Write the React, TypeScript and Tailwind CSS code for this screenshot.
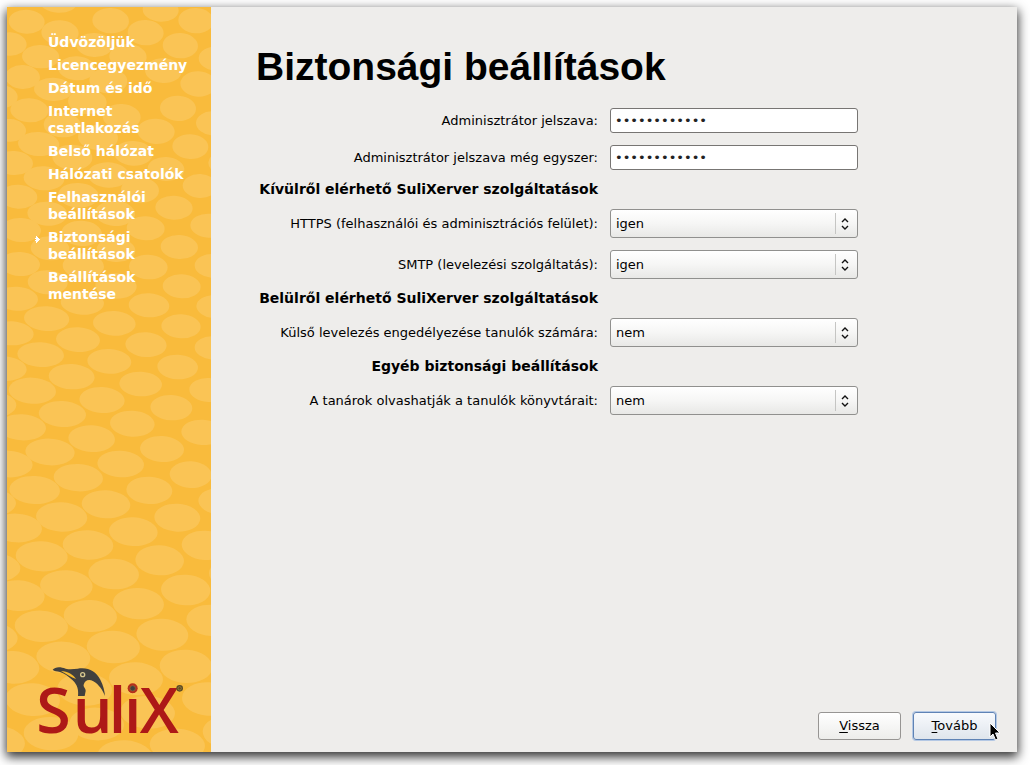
import type { ReactNode } from 'react';
import { useState } from 'react';

const steps = [
  'Üdvözöljük',
  'Licencegyezmény',
  'Dátum és idő',
  'Internet csatlakozás',
  'Belső hálózat',
  'Hálózati csatolók',
  'Felhasználói beállítások',
  'Biztonsági beállítások',
  'Beállítások mentése',
];

// cx, cy, rx, ry
const scales = [
  [80, 65, 54, 36], [175, 5, 57, 33], [332, 62, 55, 38], [482, 30, 54, 35], [588, 62, 53, 38],
  [30, 132, 50, 35], [180, 98, 56, 37], [437, 98, 54, 38], [541, 137, 53, 38], [122, 170, 56, 35],
  [283, 135, 55, 36], [384, 170, 56, 38], [648, 176, 52, 36], [230, 205, 56, 36], [490, 212, 55, 37],
  [68, 231, 52, 36], [160, 268, 58, 35], [325, 242, 57, 38], [595, 252, 54, 38], [5, 290, 48, 34],
  [88, 331, 57, 36], [262, 305, 58, 37], [534, 325, 54, 38], [365, 350, 57, 38],
  [640, 370, 52, 36], [30, 391, 48, 34], [187, 375, 56, 37], [468, 394, 56, 38], [116, 432, 62, 36],
  [294, 412, 60, 38], [571, 440, 54, 37], [400, 460, 58, 37], [42, 489, 57, 36], [217, 472, 60, 38],
  [498, 507, 55, 36], [325, 525, 62, 38], [132, 535, 61, 36], [677, 490, 52, 36], [600, 558, 52, 36],
  [55, 590, 57, 36], [235, 586, 61, 37], [420, 570, 57, 38], [522, 623, 56, 36], [345, 640, 60, 38],
  [142, 641, 60, 36], [627, 677, 56, 36], [63, 690, 60, 36], [245, 700, 61, 38], [437, 685, 57, 36],
  [538, 741, 56, 36], [348, 750, 58, 36], [150, 745, 58, 36], [60, 792, 60, 36], [250, 798, 62, 38],
  [640, 798, 56, 36], [445, 801, 58, 37], [143, 847, 60, 36], [545, 859, 57, 36], [348, 858, 62, 38],
  [50, 896, 64, 36], [247, 908, 65, 36], [447, 916, 61, 36], [647, 920, 58, 35], [140, 956, 68, 37],
  [343, 970, 64, 37], [543, 979, 59, 36], [35, 1000, 66, 36], [234, 1019, 66, 37], [438, 1034, 62, 37],
  [640, 1044, 56, 35], [122, 1064, 70, 37], [328, 1084, 66, 37], [10, 1106, 70, 37], [533, 1101, 61, 37],
  [215, 1130, 69, 38], [422, 1152, 64, 37], [97, 1172, 71, 39], [626, 1170, 58, 36], [306, 1200, 68, 39],
  [-20, 1213, 69, 38], [514, 1223, 63, 38], [187, 1242, 71, 39], [397, 1271, 67, 39], [66, 1282, 72, 39],
  [607, 1297, 63, 38], [275, 1316, 70, 40], [486, 1347, 66, 39], [150, 1356, 74, 40], [25, 1392, 73, 40],
  [362, 1392, 70, 40], [572, 1424, 63, 40], [235, 1433, 74, 41], [448, 1471, 69, 41], [104, 1470, 76, 42],
  [662, 1504, 67, 40], [-25, 1507, 73, 40], [318, 1513, 73, 42], [532, 1553, 69, 42], [185, 1551, 77, 44],
  [50, 1584, 76, 43], [400, 1595, 73, 43], [615, 1636, 70, 44], [264, 1635, 76, 44], [125, 1669, 78, 45],
  [479, 1681, 73, 45], [-17, 1702, 78, 43], [341, 1722, 76, 46], [55, 1787, 79, 46], [199, 1757, 79, 46],
  [557, 1770, 74, 46], [415, 1811, 77, 47], [702, 1722, 75, 45], [271, 1848, 80, 48], [124, 1879, 80, 47],
  [635, 1861, 76, 47], [-27, 1912, 80, 45], [487, 1904, 78, 48], [340, 1941, 80, 49], [190, 1972, 81, 47],
  [38, 2002, 80, 49], [558, 1999, 79, 50], [408, 2036, 81, 49], [254, 2068, 82, 49], [98, 2099, 82, 49],
  [625, 2097, 79, 50], [443, 2137, 82, 49], [290, 2172, 82, 49], [153, 2201, 82, 50], [-7, 2228, 82, 50],
  [688, 2197, 80, 50], [532, 2235, 83, 49], [375, 2270, 83, 49],
];

function ScalePattern() {
  return (
    <svg
      aria-hidden="true"
      className="absolute inset-0 h-full w-full"
      preserveAspectRatio="xMidYMid slice"
      viewBox="21 21 612 2235"
    >
      {scales.map(([cx, cy, rx, ry]) => (
        <ellipse
          cx={cx}
          cy={cy}
          fill="#fac455"
          key={`${cx}-${cy}`}
          rx={rx}
          ry={ry}
          transform={`rotate(3 ${cx} ${cy})`}
        />
      ))}
    </svg>
  );
}

function Logo() {
  return (
    <svg
      aria-label="SuliX"
      className="relative h-[75px] w-[150px] overflow-visible"
      role="img"
      viewBox="50 40 450 225"
    >
      <text
        fill="#ad1917"
        fontFamily="Open Sans, sans-serif"
        fontSize="188"
        fontWeight="600"
        x="48 157 265 311 358"
        y="250"
      >
        SuliX
      </text>
      {/* penguin head */}
      <path
        d="M97 60 C104 51 120 50 136 57 C150 60 160 58 172 57 C204 52 226 64 240 90 C249 107 253 124 254 139 C248 124 236 104 219 95 C205 87 193 93 190 105 C188 111 197 116 196 124 L193 139 L173 139 C175 123 172 106 157 92 C144 80 131 70 119 67 C110 64 102 65 97 60Z"
        fill="#41403e"
      />
      <path d="M122 64 C142 65 160 76 167 88 C152 83 138 73 122 64Z" fill="#f5b82e" />
      <circle cx="187" cy="75" fill="#d8c890" r="8" />
      <circle cx="187" cy="75" fill="#41403e" r="4" />
      {/* dot of the i */}
      <circle cx="337" cy="116" fill="#b5301c" r="15" />
      <circle cx="337" cy="116" fill="#41403e" r="8" stroke="#8d6a3c" strokeWidth="2" />
      <circle cx="478" cy="116" fill="#5b4a26" r="10" />
      <circle cx="478" cy="116" fill="none" r="5" stroke="#a8893a" strokeWidth="2" />
    </svg>
  );
}

function Sidebar({ current }: { current: number }) {
  return (
    <aside className="relative flex w-[204px] shrink-0 flex-col justify-between overflow-hidden bg-[#f9bb3c] pt-[27px] pb-3.5">
      <ScalePattern />
      <ol className="relative flex flex-col gap-1.5 pr-4 pl-[41px] text-sm leading-[17px] font-bold text-white">
        {steps.map((step, index) => (
          <li aria-current={index === current ? 'step' : undefined} className="relative" key={step}>
            {index === current && (
              <svg aria-hidden="true" className="absolute top-[7px] -left-[13px] h-[7px] w-[5px]" viewBox="0 0 5 7">
                <path d="M1 0 H2 V1 H3 V2 H4 V3 H5 V4 H4 V5 H3 V6 H2 V7 H1 V5 H0 V4 H1 V3 H0 V2 H1Z" fill="#fff" />
              </svg>
            )}
            {step}
          </li>
        ))}
      </ol>
      <div className="relative pl-[30px]">
        <Logo />
      </div>
    </aside>
  );
}

function Section({ children }: { children: ReactNode }) {
  return <h2 className="col-start-1 text-right text-sm leading-[15px] font-bold whitespace-nowrap">{children}</h2>;
}

interface FieldProps {
  id: string;
  label: string;
  value: string;
  onChange: (value: string) => void;
}

function PasswordField({ id, label, value, onChange }: FieldProps) {
  return (
    <>
      <label className="col-start-1 text-right whitespace-nowrap" htmlFor={id}>
        {label}
      </label>
      <input
        className="h-[25px] w-full rounded-[3px] border border-[#777573] bg-white px-1 text-[#222] outline-none"
        id={id}
        onChange={(event) => onChange(event.target.value)}
        type="password"
        value={value}
      />
    </>
  );
}

function SelectField({ id, label, value, onChange }: FieldProps) {
  return (
    <>
      <label className="col-start-1 text-right whitespace-nowrap" htmlFor={id}>
        {label}
      </label>
      <div className="relative">
        <select
          className="block h-[29px] w-full appearance-none rounded-[3px] border border-[#90908e] bg-linear-to-b from-white via-[#f6f6f5] to-[#e8e8e6] px-[5px] outline-none"
          id={id}
          onChange={(event) => onChange(event.target.value)}
          value={value}
        >
          <option value="igen">igen</option>
          <option value="nem">nem</option>
        </select>
        <span className="pointer-events-none absolute inset-y-1 right-0 flex w-[23px] items-center justify-center border-l border-[#c5c5c3] pr-1">
          <svg aria-hidden="true" className="h-3 w-2" fill="none" stroke="#111" strokeWidth="1.4" viewBox="0 0 8 12">
            <path d="M1 4 L4 1 L7 4 M1 8 L4 11 L7 8" />
          </svg>
        </span>
      </div>
    </>
  );
}

export default function App() {
  const [password, setPassword] = useState('sulixserver1');
  const [passwordAgain, setPasswordAgain] = useState('sulixserver1');
  const [https, setHttps] = useState('igen');
  const [smtp, setSmtp] = useState('igen');
  const [studentMail, setStudentMail] = useState('nem');
  const [teacherRead, setTeacherRead] = useState('nem');

  return (
    <div className="flex min-h-screen bg-white pt-[7px] pr-[13px] pb-[13px] pl-[7px] font-['DejaVu_Sans',sans-serif] text-[13px] text-black">
      <div className="flex flex-1 bg-[#eeedeb] shadow-[0_4px_10px_1px_rgba(0,0,0,0.8)]">
        <Sidebar current={7} />
        <main className="flex flex-1 flex-col justify-between">
          <form className="pt-[35px] pl-[45px]" id="security">
            <h1 className="mb-4 font-['Liberation_Sans',sans-serif] text-[39px] leading-[50px] font-bold">
              Biztonsági beállítások
            </h1>
            <div className="grid grid-cols-[342px_248px] items-center gap-3">
              <PasswordField id="password" label="Adminisztrátor jelszava:" onChange={setPassword} value={password} />
              <PasswordField
                id="password-again"
                label="Adminisztrátor jelszava még egyszer:"
                onChange={setPasswordAgain}
                value={passwordAgain}
              />
              <Section>Kívülről elérhető SuliXerver szolgáltatások</Section>
              <SelectField
                id="https"
                label="HTTPS (felhasználói és adminisztrációs felület):"
                onChange={setHttps}
                value={https}
              />
              <SelectField id="smtp" label="SMTP (levelezési szolgáltatás):" onChange={setSmtp} value={smtp} />
              <Section>Belülről elérhető SuliXerver szolgáltatások</Section>
              <SelectField
                id="student-mail"
                label="Külső levelezés engedélyezése tanulók számára:"
                onChange={setStudentMail}
                value={studentMail}
              />
              <Section>Egyéb biztonsági beállítások</Section>
              <SelectField
                id="teacher-read"
                label="A tanárok olvashatják a tanulók könyvtárait:"
                onChange={setTeacherRead}
                value={teacherRead}
              />
            </div>
          </form>
          <div className="flex justify-end gap-3 pr-[21px] pb-3">
            <button
              className="h-7 w-[83px] rounded-[3px] border border-[#979593] bg-linear-to-b from-white to-[#ededeb]"
              type="button"
            >
              <span className="underline underline-offset-2">V</span>issza
            </button>
            <div className="relative">
              <button
                className="h-7 w-[83px] rounded-[3px] border border-[#5f83b5] bg-linear-to-b from-[#f8fafd] to-[#dfe5ec] shadow-[0_0_0_1px_#b4c8e4]"
                type="button"
              >
                <span className="underline underline-offset-2">T</span>ovább
              </button>
              {/* mouse pointer */}
              <svg aria-hidden="true" className="absolute top-2.5 left-[76px] h-5 w-3" viewBox="0 0 12 20">
                <path
                  d="M1 1 V15 L4 12 L6.5 18 L9 17 L6.5 11 H11Z"
                  fill="#000"
                  stroke="#fff"
                  strokeWidth="1"
                />
              </svg>
            </div>
          </div>
        </main>
      </div>
    </div>
  );
}
